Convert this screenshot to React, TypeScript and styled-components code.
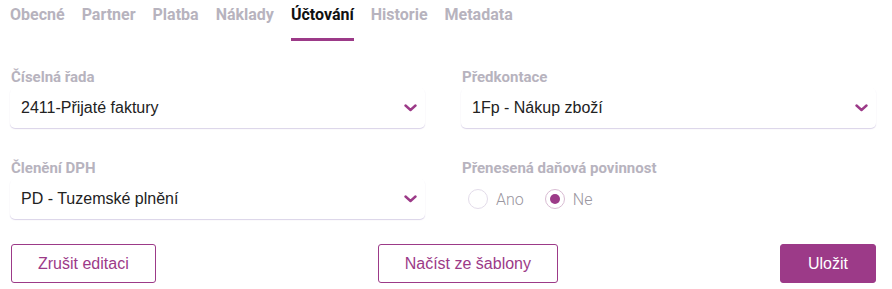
import React, { useState } from 'react';
import styled, { createGlobalStyle } from 'styled-components';

const PURPLE = '#9c3a88';
const MUTED = '#b7b3be';

const GlobalStyle = createGlobalStyle`
  body {
    margin: 0;
    background: #fff;
    font-family: Roboto, "Liberation Sans", Arial, sans-serif;
  }
`;

const Page = styled.div`
  width: 892px;
  padding: 0 16px 0 10px;
  box-sizing: border-box;
`;

const Tabs = styled.nav`
  display: flex;
  gap: 17px;
  height: 41px;
`;

const Tab = styled.div<{ $active?: boolean }>`
  height: 41px;
  box-sizing: border-box;
  padding-top: 5px;
  font-size: 16px;
  font-weight: 700;
  line-height: 20px;
  color: ${(p) => (p.$active ? '#111' : MUTED)};
  border-bottom: 3px solid ${(p) => (p.$active ? PURPLE : 'transparent')};
  cursor: pointer;
`;

const Grid = styled.div`
  display: grid;
  grid-template-columns: 1fr 1fr;
  column-gap: 36px;
  row-gap: 31px;
  margin-top: 27px;
`;

const Field = styled.div`
  display: flex;
  flex-direction: column;
  gap: 2px;
`;

const Label = styled.label`
  font-size: 15px;
  font-weight: 700;
  line-height: 18px;
  color: ${MUTED};
  padding-left: 1px;
`;

const SelectBox = styled.div`
  height: 40px;
  display: flex;
  align-items: center;
  justify-content: space-between;
  padding: 0 8px 0 11px;
  border-radius: 5px;
  background: #fff;
  box-shadow: 0 1px 1px rgba(150, 130, 190, 0.35);
  font-family: "Liberation Sans", Arial, sans-serif;
  font-size: 16px;
  color: #222;
  cursor: pointer;
`;

const RadioRow = styled.div`
  height: 40px;
  display: flex;
  align-items: center;
  gap: 21px;
  padding-left: 7px;
`;

const RadioOption = styled.label`
  display: flex;
  align-items: center;
  gap: 8px;
  font-size: 16px;
  font-weight: 300;
  color: #9a96a0;
  cursor: pointer;
`;

const RadioCircle = styled.span<{ $checked?: boolean }>`
  width: 20px;
  height: 20px;
  box-sizing: border-box;
  border-radius: 50%;
  border: 1px solid ${(p) => (p.$checked ? '#d9bcd3' : '#e3dcea')};
  display: flex;
  align-items: center;
  justify-content: center;
  &::after {
    content: '';
    width: 10px;
    height: 10px;
    border-radius: 50%;
    background: ${(p) => (p.$checked ? PURPLE : 'transparent')};
  }
`;

const Actions = styled.div`
  display: flex;
  justify-content: space-between;
  align-items: center;
  margin-top: 25px;
  padding-left: 1px;
`;

const Button = styled.button<{ $primary?: boolean }>`
  height: 39px;
  padding: 0 ${(p) => (p.$primary ? '27px' : '26px')};
  border-radius: 3px;
  border: 1px solid ${PURPLE};
  background: ${(p) => (p.$primary ? PURPLE : '#fff')};
  color: ${(p) => (p.$primary ? '#fff' : PURPLE)};
  font-family: "Liberation Sans", Arial, sans-serif;
  font-size: 16px;
  cursor: pointer;
`;

const Chevron = () => (
  <svg width="13" height="8" viewBox="0 0 13 8">
    <path d="M1.5 1.5 L6.5 6 L11.5 1.5" fill="none" stroke={PURPLE} strokeWidth="2.4" strokeLinecap="round" strokeLinejoin="round" />
  </svg>
);

const Select: React.FC<{ value: string }> = ({ value }) => (
  <SelectBox>
    <span>{value}</span>
    <Chevron />
  </SelectBox>
);

const tabs = ['Obecné', 'Partner', 'Platba', 'Náklady', 'Účtování', 'Historie', 'Metadata'];

export default function App() {
  const [reverse, setReverse] = useState(false);

  return (
    <Page>
      <GlobalStyle />
      <Tabs>
        {tabs.map((t) => (
          <Tab key={t} $active={t === 'Účtování'}>{t}</Tab>
        ))}
      </Tabs>

      <Grid>
        <Field>
          <Label>Číselná řada</Label>
          <Select value="2411-Přijaté faktury" />
        </Field>
        <Field>
          <Label>Předkontace</Label>
          <Select value="1Fp - Nákup zboží" />
        </Field>
        <Field>
          <Label>Členění DPH</Label>
          <Select value="PD - Tuzemské plnění" />
        </Field>
        <Field>
          <Label>Přenesená daňová povinnost</Label>
          <RadioRow>
            <RadioOption onClick={() => setReverse(true)}>
              <RadioCircle $checked={reverse} />
              Ano
            </RadioOption>
            <RadioOption onClick={() => setReverse(false)}>
              <RadioCircle $checked={!reverse} />
              Ne
            </RadioOption>
          </RadioRow>
        </Field>
      </Grid>

      <Actions>
        <Button>Zrušit editaci</Button>
        <Button>Načíst ze šablony</Button>
        <Button $primary>Uložit</Button>
      </Actions>
    </Page>
  );
}
